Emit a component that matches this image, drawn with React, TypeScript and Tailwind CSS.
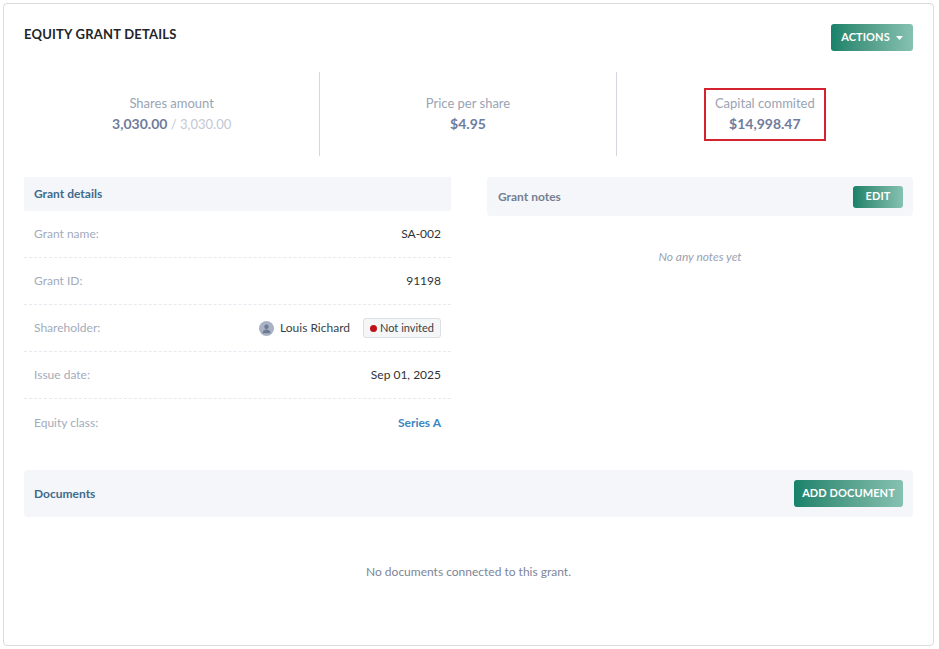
import React from "react";

const font = { fontFamily: "Lato, 'Open Sans', sans-serif" };

function GreenButton({ children, className = "" }: { children: React.ReactNode; className?: string }) {
  return (
    <button
      className={
        "flex items-center justify-center rounded-[3px] bg-gradient-to-r from-[#16826a] to-[#86c1b1] text-[11px] font-bold uppercase text-white tracking-[0.1px] " +
        className
      }
    >
      {children}
    </button>
  );
}

function Row({ label, children, last }: { label: string; children: React.ReactNode; last?: boolean }) {
  return (
    <div
      className={
        "flex h-[47px] items-center justify-between px-[10px] " +
        (last ? "" : "border-b border-dashed border-[#e6e9ef]")
      }
    >
      <span className="text-[12px] text-[#a3abbb]">{label}</span>
      <div className="flex items-center text-[12px] text-[#2f3337]">{children}</div>
    </div>
  );
}

export default function App() {
  return (
    <div className="min-h-[649px] w-[939px] bg-white p-[3px]" style={font}>
      <div className="h-[643px] w-[931px] rounded-[4px] border border-[#dcdcdc] bg-white px-[20px] pt-[20px]">
        {/* header */}
        <div className="flex items-start justify-between">
          <h1 className="mt-[1px] text-[13px] font-bold tracking-[0.2px] text-[#222529]">EQUITY GRANT DETAILS</h1>
          <GreenButton className="h-[27px] w-[82px] gap-[6px]">
            ACTIONS
            <svg width="7" height="4" viewBox="0 0 7 4">
              <path d="M0 0h7L3.5 4z" fill="white" />
            </svg>
          </GreenButton>
        </div>

        {/* stats */}
        <div className="mt-[21px] grid h-[84px] grid-cols-3">
          <div className="flex flex-col items-center justify-center gap-[2px] border-r border-[#d4d8de]">
            <span className="text-[13px] leading-[18px] text-[#9aa3b3]">Shares amount</span>
            <span className="text-[14px] leading-[20px] font-bold text-[#6f7c9c]">
              3,030.00 <span className="text-[13px] font-normal text-[#c2c8d4]">/ 3,030.00</span>
            </span>
          </div>
          <div className="flex flex-col items-center justify-center gap-[2px] border-r border-[#d4d8de]">
            <span className="text-[13px] leading-[18px] text-[#9aa3b3]">Price per share</span>
            <span className="text-[14px] leading-[20px] font-bold text-[#6f7c9c]">$4.95</span>
          </div>
          <div className="flex items-center justify-center">
            <div className="flex h-[53px] w-[122px] flex-col items-center justify-center gap-[2px] border-2 border-[#d3232f]">
              <span className="text-[13px] leading-[18px] text-[#9aa3b3]">Capital commited</span>
              <span className="text-[14px] leading-[20px] font-bold text-[#6f7c9c]">$14,998.47</span>
            </div>
          </div>
        </div>

        {/* two panels */}
        <div className="mt-[21px] flex gap-[36px]">
          <div className="w-[427px]">
            <div className="flex h-[34px] items-center bg-[#f4f6fa] px-[10px]">
              <span className="text-[12px] font-bold text-[#3f6b8c]">Grant details</span>
            </div>
            <Row label="Grant name:">SA-002</Row>
            <Row label="Grant ID:">91198</Row>
            <Row label="Shareholder:">
              <div className="flex items-center gap-[6px]">
                <span className="flex h-[15px] w-[15px] items-center justify-center overflow-hidden rounded-full bg-[#a9b2c4]">
                  <svg width="15" height="15" viewBox="0 0 15 15">
                    <circle cx="7.5" cy="5.8" r="2.2" fill="#6e7a92" />
                    <path d="M3.6 12.2c0-2.3 1.8-3.6 3.9-3.6s3.9 1.3 3.9 3.6z" fill="#6e7a92" />
                  </svg>
                </span>
                <span className="text-[12px] text-[#3a3f45]">Louis Richard</span>
                <span className="ml-[7px] flex h-[20px] items-center gap-[3px] rounded-[3px] border border-[#dcdfe4] bg-[#f5f6f8] px-[6px] text-[11px] text-[#3a3f45]">
                  <span className="h-[7px] w-[7px] rounded-full bg-[#c0121c]" />
                  Not invited
                </span>
              </div>
            </Row>
            <Row label="Issue date:">Sep 01, 2025</Row>
            <Row label="Equity class:" last>
              <span className="font-bold text-[#3d86bf]">Series A</span>
            </Row>
          </div>

          <div className="flex-1">
            <div className="flex h-[39px] items-center justify-between rounded-[4px] bg-[#f4f6fa] pl-[11px] pr-[10px]">
              <span className="text-[12px] font-bold text-[#757f90]">Grant notes</span>
              <GreenButton className="h-[22px] w-[50px]">EDIT</GreenButton>
            </div>
            <div className="mt-[32px] text-center text-[12px] italic text-[#9aa2b2]">No any notes yet</div>
          </div>
        </div>

        {/* documents */}
        <div className="mt-[24px] flex h-[47px] items-center justify-between rounded-[4px] bg-[#f4f6fa] pl-[10px] pr-[10px]">
          <span className="text-[12px] font-bold text-[#3f6b8c]">Documents</span>
          <GreenButton className="h-[27px] w-[109px]">ADD DOCUMENT</GreenButton>
        </div>
        <div className="mt-[46px] text-center text-[12px] text-[#7d8596]">No documents connected to this grant.</div>
      </div>
    </div>
  );
}
